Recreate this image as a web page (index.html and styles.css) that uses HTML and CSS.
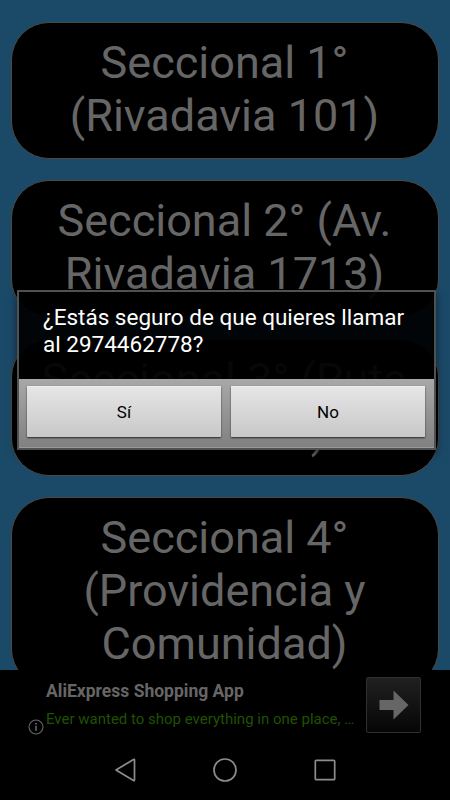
FILE: index.html
```
<!DOCTYPE html>
<html lang="es">
<head>
    <meta charset="UTF-8">
    <meta name="viewport" content="width=device-width, initial-scale=1.0">
    <title>Seccionales</title>
    <link rel="stylesheet" href="styles.css">
</head>
<body>
    <div class="screen">
        <main class="list">
            <button class="card">Seccional 1°<br>(Rivadavia 101)</button>
            <button class="card">Seccional 2° (Av.<br>Rivadavia 1713)</button>
            <button class="card">Seccional 3° (Ruta<br>Nacional )</button>
            <button class="card">Seccional 4°<br>(Providencia y<br>Comunidad)</button>
        </main>

        <div class="ad">
            <svg class="ad-info" width="16" height="16" viewBox="0 0 16 16">
                <circle cx="8" cy="8" r="7" fill="none" stroke="#666" stroke-width="1.1"/>
                <path d="M8 4v1.6M8 6.8v5" stroke="#777" stroke-width="1.4"/>
            </svg>
            <div class="ad-text">
                <div class="ad-title">AliExpress Shopping App</div>
                <div class="ad-desc">Ever wanted to shop everything in one place, …</div>
            </div>
            <div class="ad-button">
                <svg width="30" height="30" viewBox="0 0 30 30">
                    <path d="M0.5 10H14.5V0.5L29.5 15L14.5 29.5V20H0.5Z" fill="#666"/>
                </svg>
            </div>
        </div>

        <nav class="navbar">
            <svg width="24" height="26" viewBox="0 0 24 26">
                <path d="M3 13L20.5 2.5Q21.5 2 21.5 3V23Q21.5 24 20.5 23.5Z" fill="none" stroke="#8c8c8c" stroke-width="1.7" stroke-linejoin="round"/>
            </svg>
            <svg width="24" height="26" viewBox="0 0 24 26">
                <circle cx="12" cy="13" r="11" fill="none" stroke="#8c8c8c" stroke-width="1.7"/>
            </svg>
            <svg width="24" height="26" viewBox="0 0 24 26">
                <rect x="2.3" y="3.3" width="19.4" height="19.4" rx="1" fill="none" stroke="#8c8c8c" stroke-width="1.7"/>
            </svg>
        </nav>

        <div class="dialog">
            <div class="dialog-message">¿Estás seguro de que quieres llamar<br>al 2974462778?</div>
            <div class="dialog-buttons">
                <button>Sí</button>
                <button>No</button>
            </div>
        </div>
    </div>
</body>
</html>
```
FILE: styles.css
```
* {
    box-sizing: border-box;
}
body {
    margin: 0;
    font-family: Roboto, sans-serif;
    background: #1b4968;
}
button {
    font-family: inherit;
    margin: 0;
}
.screen {
    position: relative;
    display: flex;
    flex-direction: column;
    width: 450px;
    height: 800px;
    overflow: hidden;
}
.list {
    display: flex;
    flex-direction: column;
    gap: 21.6px;
    height: 670px;
    padding: 22px 11px 0;
    overflow: hidden;
}
.card {
    flex-shrink: 0;
    padding: 14px 1px 15.4px 0;
    background: #000;
    border: 1px solid #4c4845;
    border-radius: 38px;
    color: #666;
    font-size: 45px;
    line-height: 52.7px;
    text-align: center;
    white-space: nowrap;
}
.ad {
    display: flex;
    height: 70px;
    padding: 7px 29px 0 28px;
    background: #000;
}
.ad-info {
    margin: 42px 2px 0 0;
}
.ad-text {
    flex: 1;
    min-width: 0;
    white-space: nowrap;
}
.ad-title {
    margin-top: 4px;
    color: #666;
    font-size: 17.5px;
    font-weight: bold;
    line-height: 20px;
}
.ad-desc {
    margin-top: 9px;
    color: #1f5200;
    font-size: 15px;
    line-height: 18px;
}
.ad-button {
    display: flex;
    align-items: center;
    justify-content: center;
    width: 55px;
    height: 56px;
    border: 1px solid #303030;
    border-radius: 2px;
    background: linear-gradient(#202020, #060606);
}
.navbar {
    display: flex;
    justify-content: center;
    gap: 76px;
    height: 60px;
    padding-top: 17px;
    background: #000;
}
.dialog {
    position: absolute;
    left: 17px;
    top: 290px;
    width: 419px;
    height: 160px;
    border: 2px solid #505050;
    box-shadow: 0 3px 8px rgba(0,0,0,0.5);
}
.dialog-message {
    height: 87px;
    padding: 12px 0 0 24px;
    background: rgba(0,0,0,0.93);
    color: #fff;
    font-size: 22.5px;
    line-height: 27px;
    white-space: nowrap;
}
.dialog-buttons {
    display: flex;
    gap: 10px;
    height: 69px;
    padding: 7px 9px 0 8px;
    background: linear-gradient(#a8a8a8, #808080);
    box-shadow: inset 0 -1px 0 #999;
}
.dialog-buttons button {
    flex: 1;
    height: 51px;
    padding: 0;
    border: 0;
    border-radius: 1px;
    background: linear-gradient(#e6e6e6, #c8c8c8);
    box-shadow: 0 1px 2px rgba(0,0,0,0.7), inset 0 1px 0 #eee;
    color: #000;
    font-size: 17px;
}
```
